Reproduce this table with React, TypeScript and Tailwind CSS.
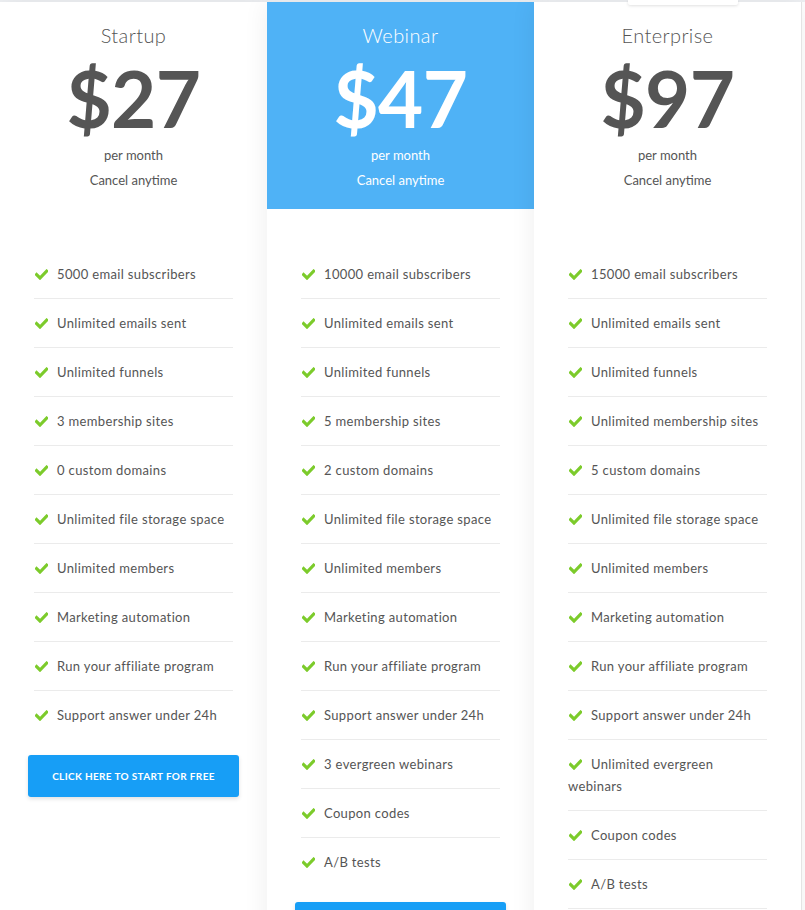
import React from "react";

type Plan = {
  name: string;
  price: string;
  featured?: boolean;
  features: string[];
  lastBorder?: boolean;
  extra?: boolean;
};

const plans: Plan[] = [
  {
    name: "Startup",
    price: "$27",
    features: [
      "5000 email subscribers",
      "Unlimited emails sent",
      "Unlimited funnels",
      "3 membership sites",
      "0 custom domains",
      "Unlimited file storage space",
      "Unlimited members",
      "Marketing automation",
      "Run your affiliate program",
      "Support answer under 24h",
    ],
  },
  {
    name: "Webinar",
    price: "$47",
    featured: true,
    features: [
      "10000 email subscribers",
      "Unlimited emails sent",
      "Unlimited funnels",
      "5 membership sites",
      "2 custom domains",
      "Unlimited file storage space",
      "Unlimited members",
      "Marketing automation",
      "Run your affiliate program",
      "Support answer under 24h",
      "3 evergreen webinars",
      "Coupon codes",
      "A/B tests",
    ],
  },
  {
    name: "Enterprise",
    price: "$97",
    extra: true,
    lastBorder: true,
    features: [
      "15000 email subscribers",
      "Unlimited emails sent",
      "Unlimited funnels",
      "Unlimited membership sites",
      "5 custom domains",
      "Unlimited file storage space",
      "Unlimited members",
      "Marketing automation",
      "Run your affiliate program",
      "Support answer under 24h",
      "Unlimited evergreen webinars",
      "Coupon codes",
      "A/B tests",
    ],
  },
];

function Check() {
  return (
    <svg
      width="13"
      height="11"
      viewBox="0 0 13 11"
      className="inline-block align-[-1px] mr-[9px] ml-[1px]"
    >
      <path
        d="M1.6 5.6 L5 9 L11.6 2.2"
        fill="none"
        stroke="#7ccb2b"
        strokeWidth="3.2"
        strokeLinecap="square"
      />
    </svg>
  );
}

function Column({ plan }: { plan: Plan }) {
  const head = plan.featured
    ? "bg-[#4fb2f6] text-white"
    : "bg-white text-[#555555]";
  return (
    <div
      className={`relative shrink-0 bg-white shadow-[0_0_24px_rgba(0,0,0,0.07)] ${
        plan.extra ? "border-r border-[#e4e4e4] w-[268px]" : "w-[267px]"
      }`}
    >
      {plan.extra && (
        <div className="absolute left-[94px] top-[-2px] w-[110px] h-[5px] bg-white rounded-b-[2px] shadow-[0_1px_3px_rgba(0,0,0,0.12)]" />
      )}
      <div
        className={`${head} flex flex-col items-center pt-[19px] pb-[16px] font-['Lato',sans-serif]`}
      >
        <div className="text-[20px] leading-[28px] font-light tracking-[0.4px]">
          {plan.name}
        </div>
        <div className="mt-[9px] text-[78px] leading-[80px] font-bold tracking-[-0.5px]">
          {plan.price}
        </div>
        <div className="mt-[5px] text-[13px] leading-[25px]">per month</div>
        <div className="text-[13px] leading-[25px]">Cancel anytime</div>
      </div>
      <ul className="mt-[41px] mx-[34px] font-['Lato',sans-serif] text-[13px] leading-[22px] tracking-[0.35px] text-[#555555]">
        {plan.features.map((f, i) => {
          const last = i === plan.features.length - 1;
          const border = !last || plan.lastBorder;
          return (
            <li
              key={f}
              className={`py-[13px] ${
                border ? "border-b border-[#ebebeb]" : "border-b border-transparent"
              }`}
            >
              <Check />
              {f}
            </li>
          );
        })}
      </ul>
      <div className="px-[28px] mt-[15px] pb-[30px]">
        <button className="w-[211px] h-[42px] rounded-[3px] bg-[#179ef6] text-white text-[10px] font-bold tracking-[0.35px] font-['Lato',sans-serif] shadow-[0_2px_4px_rgba(0,0,0,0.12)]">
          CLICK HERE TO START FOR FREE
        </button>
      </div>
    </div>
  );
}

export default function App() {
  return (
    <div className="min-h-[910px] w-[805px] bg-white overflow-hidden">
      <div className="flex items-stretch pt-[2px] bg-[linear-gradient(#eef0f3,#eef0f3)] bg-no-repeat bg-[length:100%_2px]">
        {plans.map((p) => (
          <Column key={p.name} plan={p} />
        ))}
      </div>
    </div>
  );
}
